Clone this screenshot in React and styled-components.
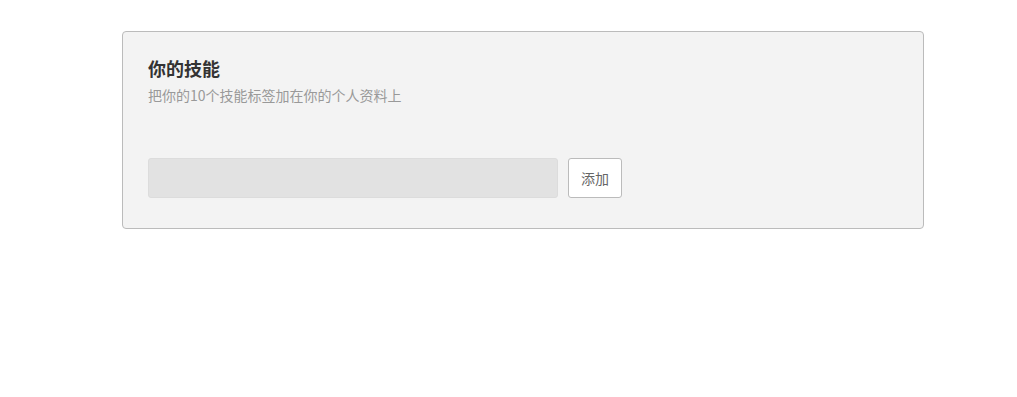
import React from "react";
import styled, { createGlobalStyle } from "styled-components";

const Global = createGlobalStyle`
  html, body { margin: 0; padding: 0; background: #fff; }
  body { font-family: "Noto Sans CJK SC", "Noto Sans", sans-serif; }
  * { box-sizing: border-box; }
`;

const Card = styled.section`
  margin: 31px 0 0 122px;
  width: 802px;
  background: #f3f3f3;
  border: 1px solid #bbbbbb;
  border-radius: 4px;
  padding: 24px 25px 30px;
`;

const Title = styled.h2`
  margin: 0;
  font-size: 18px;
  line-height: 24px;
  font-weight: 700;
  color: #333;
`;

const Subtitle = styled.p`
  margin: 5px 0 0;
  font-size: 14px;
  line-height: 20px;
  color: #999;
`;

const Row = styled.div`
  display: flex;
  gap: 10px;
  margin-top: 53px;
`;

const Input = styled.input`
  width: 410px;
  height: 40px;
  background: #e2e2e2;
  border: 1px solid #dcdcdc;
  border-radius: 3px;
  padding: 0 10px;
  font: inherit;
  font-size: 14px;
  outline: none;
`;

const Button = styled.button`
  width: 54px;
  height: 40px;
  background: #fff;
  border: 1px solid #bbbbbb;
  border-radius: 3px;
  font-family: inherit;
  font-size: 14px;
  color: #666;
  padding: 0;
  cursor: pointer;
`;

export default function App() {
  return (
    <>
      <Global />
      <Card>
        <Title>你的技能</Title>
        <Subtitle>把你的10个技能标签加在你的个人资料上</Subtitle>
        <Row>
          <Input type="text" />
          <Button>添加</Button>
        </Row>
      </Card>
    </>
  );
}
